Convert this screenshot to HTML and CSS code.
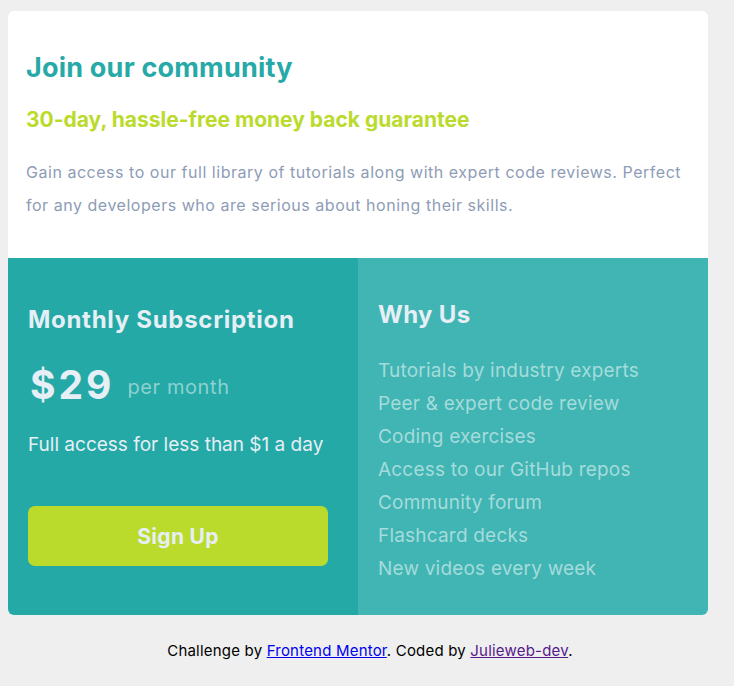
FILE: index.html
```html
<!DOCTYPE html>
<html lang="en">
<head>
<meta charset="utf-8">
<title>Single price grid component</title>
<link rel="stylesheet" href="styles.css">
</head>
<body>
<main class="card">
  <section class="intro">
    <h1 class="intro-title">Join our community</h1>
    <h2 class="intro-sub">30-day, hassle-free money back guarantee</h2>
    <p class="intro-text">Gain access to our full library of tutorials along with expert code reviews. Perfect for any developers who are serious about honing their skills.</p>
  </section>
  <div class="panels">
    <section class="plan">
      <h2 class="panel-title">Monthly Subscription</h2>
      <div class="price"><span class="price-amount">$29</span><span class="price-period">per month</span></div>
      <p class="plan-note">Full access for less than $1 a day</p>
      <button class="signup" type="button">Sign Up</button>
    </section>
    <section class="why">
      <h2 class="panel-title why-title">Why Us</h2>
      <ul class="why-list">
        <li>Tutorials by industry experts</li>
        <li>Peer &amp; expert code review</li>
        <li>Coding exercises</li>
        <li>Access to our GitHub repos</li>
        <li>Community forum</li>
        <li>Flashcard decks</li>
        <li>New videos every week</li>
      </ul>
    </section>
  </div>
</main>
<footer class="attribution">
  Challenge by <a href="#fm" class="link">Frontend Mentor</a>. Coded by <a href="#" class="link visited">Julieweb-dev</a>.
</footer>
</body>
</html>
```

FILE: styles.css
```css
* { box-sizing: border-box; }

body {
  margin: 0;
  padding: 11px 8px 0;
  background: #efefef;
  font-family: "Inter", "Lato", sans-serif;
  width: 734px;
}

.card {
  width: 700px;
  border-radius: 6px;
  overflow: hidden;
  background: #fff;
}

.intro {
  height: 247px;
  padding: 40px 18px 0;
}

.intro-title {
  margin: 0;
  font-size: 27px;
  line-height: 34px;
  font-weight: 700;
  letter-spacing: 0.2px;
  color: #26a9a7;
}

.intro-sub {
  margin: 22px 0 0;
  font-size: 21px;
  line-height: 26px;
  font-weight: 700;
  color: #badb2c;
}

.intro-text {
  margin: 23px 0 0;
  font-size: 16px;
  line-height: 33px;
  letter-spacing: 0.53px;
  color: #8e9cb6;
}

.panels {
  display: flex;
  height: 357px;
}

.plan {
  width: 350px;
  background: #24a9a7;
  padding: 47px 20px 0;
  color: #e6eff5;
}

.why {
  flex: 1;
  background: #41b4b4;
  padding: 42px 20px 0;
  color: #e6eff5;
}

.panel-title {
  margin: 0;
  font-size: 24px;
  line-height: 30px;
  font-weight: 700;
  letter-spacing: 0.7px;
}

.why-title {
  letter-spacing: 0.3px;
}

.price {
  display: flex;
  align-items: center;
  margin-top: 25px;
  padding-left: 2px;
}

.price-amount {
  font-size: 39px;
  line-height: 50px;
  font-weight: 700;
  letter-spacing: 3px;
}

.price-period {
  margin-left: 13px;
  padding-top: 4px;
  font-size: 20px;
  letter-spacing: 0.6px;
  color: #8dd1d0;
}

.plan-note {
  margin: 24px 0 0;
  font-size: 19px;
  line-height: 22px;
}

.signup {
  display: block;
  margin-top: 50px;
  width: 300px;
  height: 60px;
  border: 0;
  border-radius: 7px;
  background: #badb2c;
  color: #e6eff5;
  font-family: inherit;
  font-size: 21px;
  font-weight: 700;
  letter-spacing: 0.3px;
}

.why-list {
  list-style: none;
  margin: 24px 0 0;
  padding: 0;
  font-size: 19px;
  line-height: 33px;
  letter-spacing: 0.2px;
  color: #a4dcdb;
}

.attribution {
  margin-top: 26px;
  padding-left: 6px;
  text-align: center;
  font-size: 15px;
  letter-spacing: 0.2px;
  color: #000;
  width: 718px;
}

.link { color: #0000ee; }
.link.visited { color: #551a8b; }
```
